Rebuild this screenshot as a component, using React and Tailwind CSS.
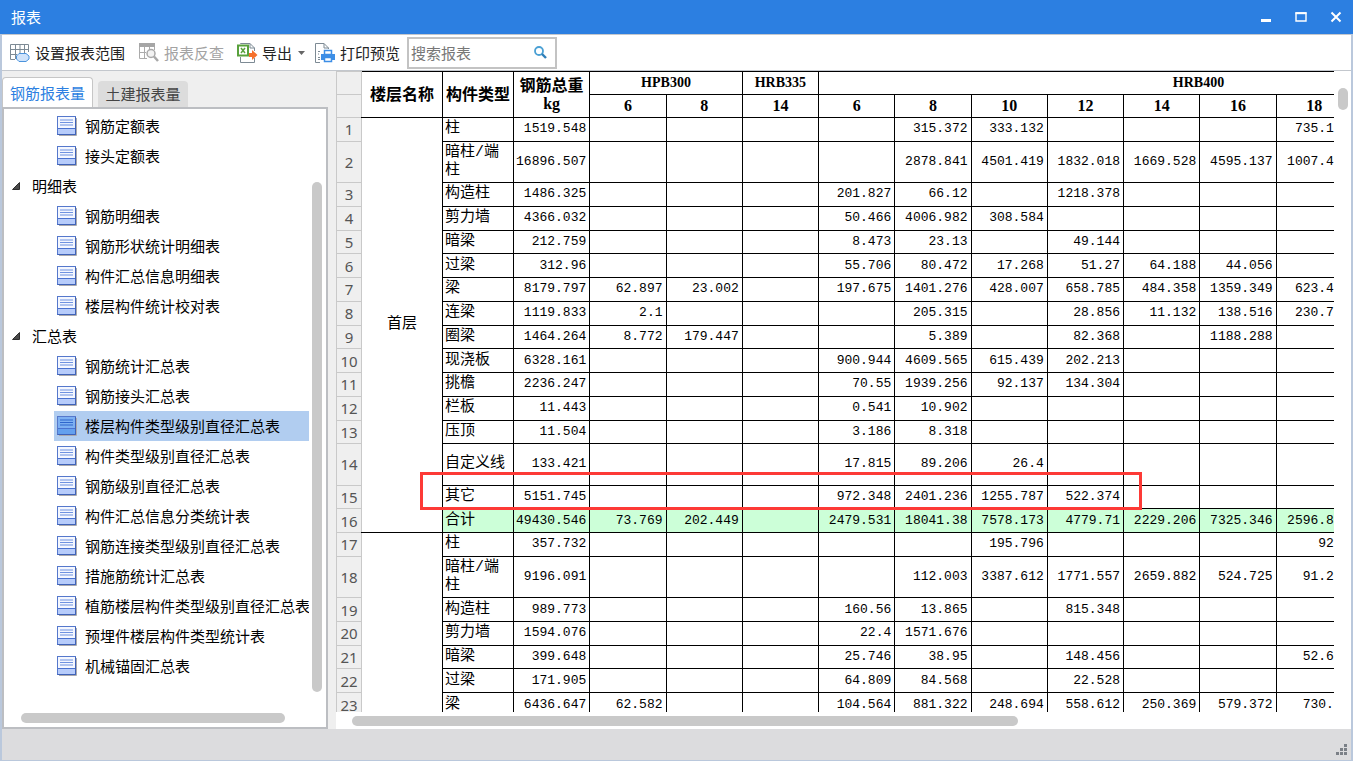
import React from 'react';

const quotaReports = ['钢筋定额表', '接头定额表'];

const detailReports = ['钢筋明细表', '钢筋形状统计明细表', '构件汇总信息明细表', '楼层构件统计校对表'];

const summaryReports = [
  '钢筋统计汇总表',
  '钢筋接头汇总表',
  '楼层构件类型级别直径汇总表',
  '构件类型级别直径汇总表',
  '钢筋级别直径汇总表',
  '构件汇总信息分类统计表',
  '钢筋连接类型级别直径汇总表',
  '措施筋统计汇总表',
  '植筋楼层构件类型级别直径汇总表',
  '预埋件楼层构件类型统计表',
  '机械锚固汇总表',
];

const diameters = ['6', '8', '14', '6', '8', '10', '12', '14', '16', '18'];

// name, total, HPB300 6/8, HRB335 14, HRB400 6/8/10/12/14/16/18
const rows = [
  ['柱', '1519.548', '', '', '', '', '315.372', '333.132', '', '', '', '735.1'],
  ['暗柱/端柱', '16896.507', '', '', '', '', '2878.841', '4501.419', '1832.018', '1669.528', '4595.137', '1007.4'],
  ['构造柱', '1486.325', '', '', '', '201.827', '66.12', '', '1218.378', '', '', ''],
  ['剪力墙', '4366.032', '', '', '', '50.466', '4006.982', '308.584', '', '', '', ''],
  ['暗梁', '212.759', '', '', '', '8.473', '23.13', '', '49.144', '', '', ''],
  ['过梁', '312.96', '', '', '', '55.706', '80.472', '17.268', '51.27', '64.188', '44.056', ''],
  ['梁', '8179.797', '62.897', '23.002', '', '197.675', '1401.276', '428.007', '658.785', '484.358', '1359.349', '623.4'],
  ['连梁', '1119.833', '2.1', '', '', '', '205.315', '', '28.856', '11.132', '138.516', '230.7'],
  ['圈梁', '1464.264', '8.772', '179.447', '', '', '5.389', '', '82.368', '', '1188.288', ''],
  ['现浇板', '6328.161', '', '', '', '900.944', '4609.565', '615.439', '202.213', '', '', ''],
  ['挑檐', '2236.247', '', '', '', '70.55', '1939.256', '92.137', '134.304', '', '', ''],
  ['栏板', '11.443', '', '', '', '0.541', '10.902', '', '', '', '', ''],
  ['压顶', '11.504', '', '', '', '3.186', '8.318', '', '', '', '', ''],
  ['自定义线', '133.421', '', '', '', '17.815', '89.206', '26.4', '', '', '', ''],
  ['其它', '5151.745', '', '', '', '972.348', '2401.236', '1255.787', '522.374', '', '', ''],
  ['合计', '49430.546', '73.769', '202.449', '', '2479.531', '18041.38', '7578.173', '4779.71', '2229.206', '7325.346', '2596.8'],
  ['柱', '357.732', '', '', '', '', '', '195.796', '', '', '', '92'],
  ['暗柱/端柱', '9196.091', '', '', '', '', '112.003', '3387.612', '1771.557', '2659.882', '524.725', '91.2'],
  ['构造柱', '989.773', '', '', '', '160.56', '13.865', '', '815.348', '', '', ''],
  ['剪力墙', '1594.076', '', '', '', '22.4', '1571.676', '', '', '', '', ''],
  ['暗梁', '399.648', '', '', '', '25.746', '38.95', '', '148.456', '', '', '52.6'],
  ['过梁', '171.905', '', '', '', '64.809', '84.568', '', '22.528', '', '', ''],
  ['梁', '6436.647', '62.582', '', '', '104.564', '881.322', '248.694', '558.612', '250.369', '579.372', '730.'],
];

const tallRows = [1, 13, 17];

const ReportIcon = ({ selected }) => (
  <svg width="20" height="20" viewBox="0 0 20 20" className="shrink-0">
    <path d="M2 19.5H19.5V2" fill="none" stroke="#a9a9ad" />
    <rect x="0.5" y="0.5" width="18" height="18" fill={selected ? '#7db0f2' : '#f4f7ff'} stroke="#5578cc" />
    <rect x="1" y="13" width="17" height="5" fill={selected ? '#64a0ee' : '#b7ccfb'} />
    <path d="M1 12.5H18" stroke="#4a72cf" />
    <path d="M0.5 18.5H18.5V1" fill="none" stroke="#3f62b8" />
    <path d="M3 4H16M3 6.5H16M3 9H16" stroke={selected ? '#2f66cc' : '#6f92e0'} />
  </svg>
);

const RangeIcon = () => (
  <svg width="20" height="18" viewBox="0 0 20 18">
    <path d="M0.5 0.5H18.5V8M0.5 0.5V15.5H5M0.5 5.5H18.5M0.5 10.5H7M5.5 0.5V15M10 0.5V9M14.5 0.5V9" fill="none" stroke="#7d8a94" />
    <path d="M9 9.5H16L19 12V15L16 17.5H9L6.5 15V12Z" fill="#cfe3fb" stroke="#4b93dc" />
  </svg>
);

const LookupIcon = () => (
  <svg width="20" height="19" viewBox="0 0 20 19">
    <rect x="0" y="0" width="16" height="4" fill="#a6a6a6" />
    <path d="M0.5 4V15.5H8M15.5 4V7M5.5 4V15.5M10.5 4V6M0.5 9.5H7" fill="none" stroke="#ababab" />
    <circle cx="12" cy="10.5" r="4" fill="#f2f2f2" stroke="#a8a8a8" strokeWidth="1.5" />
    <path d="M15 13.5L19 18" stroke="#a8a8a8" strokeWidth="2.5" />
  </svg>
);

const ExportIcon = () => (
  <svg width="21" height="20" viewBox="0 0 21 20">
    <path d="M3.5 1V0.5H13L17.5 5V8M3.5 14V19.5H17.5V15M13 0.5V5H17.5" fill="none" stroke="#7d8a94" />
    <rect x="1" y="2.5" width="10" height="10" fill="#fff" stroke="#58a13c" strokeWidth="2" />
    <path d="M4 5L8 10M8 5L4 10" stroke="#58a13c" strokeWidth="1.5" />
    <path d="M12 10H15V7L20.5 12L15 17V14H12Z" fill="#f5702c" />
  </svg>
);

const PrintIcon = () => (
  <svg width="20" height="20" viewBox="0 0 20 20">
    <path d="M5 19.5H0.5V0.5H9L13.5 5V6M9 0.5V5H13.5" fill="none" stroke="#7d8a94" />
    <path d="M3 8.5H5M3 11H4M3 14.5H5M3 16.5H5" stroke="#7d8a94" />
    <rect x="9.5" y="7.5" width="7" height="4" fill="#fff" stroke="#3d8ee6" strokeWidth="1.5" />
    <path d="M6 11H20V17H17V15H9V17H6Z" fill="#3d8ee6" />
    <rect x="9.5" y="14.5" width="7" height="4" fill="#fff" stroke="#3d8ee6" strokeWidth="1.5" />
  </svg>
);

const TreeGroup = ({ title, reports }) => (
  <li>
    {title && (
      <button className="flex h-[30px] w-full items-center gap-3 pl-2 text-left">
        <svg width="8" height="8" viewBox="0 0 8 8">
          <path d="M7.5 0.5V7.5H0.5Z" fill="#4a4a4a" stroke="#2e2e2e" />
        </svg>
        <span>{title}</span>
      </button>
    )}
    <ul className="pl-[50px]">
      {reports.map((name) => {
        const selected = name === '楼层构件类型级别直径汇总表';
        return (
          <li key={name}>
            <button
              className={`flex h-[30px] w-full items-center gap-2 pl-[3px] text-left whitespace-nowrap ${
                selected ? 'bg-[#b1cdf0]' : ''
              }`}
            >
              <ReportIcon selected={selected} />
              <span>{name}</span>
            </button>
          </li>
        );
      })}
    </ul>
  </li>
);

const TitleBar = () => (
  <header className="flex h-[34px] shrink-0 items-center justify-between bg-[#2c7fe1] pl-[11px] text-white">
    <h1>报表</h1>
    <div className="flex h-full">
      <button aria-label="最小化" className="flex w-[35px] items-center justify-center">
        <svg width="12" height="12" viewBox="0 0 12 12">
          <rect x="1" y="8" width="10" height="3" fill="#fff" />
        </svg>
      </button>
      <button aria-label="最大化" className="flex w-[35px] items-center justify-center">
        <svg width="12" height="12" viewBox="0 0 12 12">
          <path d="M1 2H11V10H1Z" fill="none" stroke="#fff" strokeWidth="1.4" />
          <path d="M0.5 2.2H11.5" stroke="#fff" strokeWidth="2" />
        </svg>
      </button>
      <button aria-label="关闭" className="flex w-[35px] items-center justify-center">
        <svg width="12" height="12" viewBox="0 0 12 12">
          <path d="M1.5 1.5L10.5 10.5M10.5 1.5L1.5 10.5" stroke="#fff" strokeWidth="2" />
        </svg>
      </button>
    </div>
  </header>
);

const Toolbar = () => (
  <div className="flex h-[37px] shrink-0 items-center border-y border-[#c3c7cd] bg-white pl-2 text-[#222]">
    <button className="flex items-center gap-[5px]">
      <RangeIcon />
      设置报表范围
    </button>
    <button className="ml-[14px] flex items-center gap-[5px] text-[#a3a3a3]">
      <LookupIcon />
      报表反查
    </button>
    <button className="ml-[13px] flex items-center gap-1">
      <ExportIcon />
      导出
      <svg width="7" height="4" viewBox="0 0 7 4" className="ml-[2px]">
        <path d="M0 0H7L3.5 4Z" fill="#666" />
      </svg>
    </button>
    <button className="ml-[10px] flex items-center gap-[5px]">
      <PrintIcon />
      打印预览
    </button>
    <label className="ml-[7px] flex h-8 w-[150px] items-center border-2 border-[#c3c3c3] pr-2 pl-[2px]">
      <input
        type="text"
        aria-label="搜索报表"
        placeholder="搜索报表"
        className="min-w-0 flex-1 outline-none placeholder:text-[#777]"
      />
      <svg width="13" height="13" viewBox="0 0 13 13">
        <circle cx="5" cy="5" r="4" fill="none" stroke="#4aa0d4" strokeWidth="1.8" />
        <path d="M8 8L12 12" stroke="#2f7fb8" strokeWidth="2.4" />
      </svg>
    </label>
  </div>
);

const Sidebar = () => (
  <aside className="flex w-[326px] shrink-0 flex-col pt-[6px]">
    <div className="flex items-end gap-[5px]">
      <button className="h-[30px] w-[91px] rounded-t-sm border border-b-0 border-[#c6c6c6] bg-white text-[#2c7fe1]">
        钢筋报表量
      </button>
      <button className="h-[26px] w-[90px] rounded-t-sm bg-[#dcdcdc] text-[#444]">土建报表量</button>
    </div>
    <div className="flex min-h-0 flex-1 flex-col border-2 border-[#bcbec2] bg-white">
      <div className="flex min-h-0 flex-1">
        <ul className="min-w-0 flex-1 overflow-hidden pt-[2px] text-black">
          <TreeGroup reports={quotaReports} />
          <TreeGroup title="明细表" reports={detailReports} />
          <TreeGroup title="汇总表" reports={summaryReports} />
        </ul>
        <div className="w-[17px] shrink-0 pt-[73px] pl-[3px]">
          <div className="h-[510px] w-[10px] rounded-full bg-[#c9c9c9]" />
        </div>
      </div>
      <div className="h-[14px] shrink-0 pr-[41px] pl-[17px]">
        <div className="h-[10px] rounded-full bg-[#c9c9c9]" />
      </div>
    </div>
  </aside>
);

const rowHead = 'border border-[#c9c9c9] bg-[#efefef] p-0 text-center font-normal text-[#555] font-["Noto_Sans"]';
const headCell = 'border border-black p-0 leading-[18px] font-bold';
const gradeCell = `${headCell} text-[14px]`;
const floorCell = 'border border-black border-l-[#c9c9c9] p-0 text-center text-[15px]';

const ReportTable = () => (
  <table className="h-[646px] w-[1243px] table-fixed border-collapse font-['Liberation_Mono','Noto_Sans_CJK_SC',monospace] text-black">
    <colgroup>
      <col className="w-[25px]" />
      <col className="w-[81px]" />
      <col className="w-[71px]" />
      {rows[0].slice(1).map((_, i) => (
        <col key={i} />
      ))}
      <col className="w-[226px]" />
    </colgroup>
    <thead className="font-['Liberation_Serif','Noto_Sans_CJK_SC',serif] text-[16px]">
      <tr className="h-[23px]">
        <th className={rowHead} />
        <th rowSpan={2} className={`${headCell} border-l-[#c9c9c9]`}>楼层名称</th>
        <th rowSpan={2} className={headCell}>构件类型</th>
        <th rowSpan={2} className={headCell}>
          钢筋总重
          <br />
          kg
        </th>
        <th colSpan={2} className={gradeCell}>HPB300</th>
        <th className={gradeCell}>HRB335</th>
        <th colSpan={8} className={gradeCell}>HRB400</th>
      </tr>
      <tr className="h-[23px]">
        <th className={rowHead} />
        {diameters.map((d, i) => (
          <th key={i} className={headCell}>{d}</th>
        ))}
        <th className={headCell} />
      </tr>
    </thead>
    <tbody>
      {rows.map(([name, ...values], i) => (
        <tr key={i} className={tallRows.includes(i) ? 'h-[40px]' : 'h-[23px]'}>
          <th className={`${rowHead} text-[15px] leading-[18px]`}>{i + 1}</th>
          {i === 0 && <td rowSpan={16} className={floorCell}>首层</td>}
          {i === 16 && <td rowSpan={7} className={floorCell} />}
          <td className={`border border-black py-0 pr-1 pl-[2px] text-[15px] leading-[18px] ${name === '合计' ? 'bg-[#ccffd8]' : ''}`}>
            {name}
          </td>
          {values.map((v, j) => (
            <td
              key={j}
              className={`border border-black py-0 pl-0 text-right text-[13px] leading-[18px] ${
                j === 10 ? 'pr-[18px]' : 'pr-[3px]'
              } ${name === '合计' ? 'bg-[#ccffd8]' : ''}`}
            >
              {v}
            </td>
          ))}
          <td className="border border-black p-0" />
        </tr>
      ))}
    </tbody>
  </table>
);

const ReportView = () => (
  <main className="flex min-w-0 flex-1 flex-col bg-white">
    <div className="flex min-h-0 flex-1">
      <div className="relative min-w-0 flex-1 overflow-hidden">
        <ReportTable />
        <div className="absolute top-[401px] left-[84px] h-[38px] w-[722px] border-3 border-[#fd3a36]" />
      </div>
      <div className="w-[17px] shrink-0 pt-[17px] pl-1">
        <div className="h-[22px] w-[10px] rounded-full bg-[#c9c9c9]" />
      </div>
    </div>
    <div className="h-[17px] shrink-0 pt-1 pl-4">
      <div className="h-[10px] w-2/3 rounded-full bg-[#c9c9c9]" />
    </div>
  </main>
);

export default function App() {
  return (
    <div className="flex h-screen flex-col overflow-hidden bg-[#efefef] font-['Noto_Sans_CJK_SC',sans-serif] text-[15px] leading-5">
      <TitleBar />
      <div className="flex min-h-0 flex-1 flex-col border-x-2 border-b border-[#bac8dc]">
        <Toolbar />
        <div className="flex min-h-0 flex-1 gap-2">
          <Sidebar />
          <ReportView />
        </div>
        <footer className="flex h-[31px] shrink-0 items-end justify-end bg-[#dcdcde] pr-[3px] pb-1">
          <svg width="12" height="12" viewBox="0 0 12 12" fill="#7b8087">
            <rect x="8" y="0" width="3" height="3" />
            <rect x="4" y="4" width="3" height="3" />
            <rect x="8" y="4" width="3" height="3" />
            <rect x="0" y="8" width="3" height="3" />
            <rect x="4" y="8" width="3" height="3" />
            <rect x="8" y="8" width="3" height="3" />
          </svg>
        </footer>
      </div>
    </div>
  );
}
